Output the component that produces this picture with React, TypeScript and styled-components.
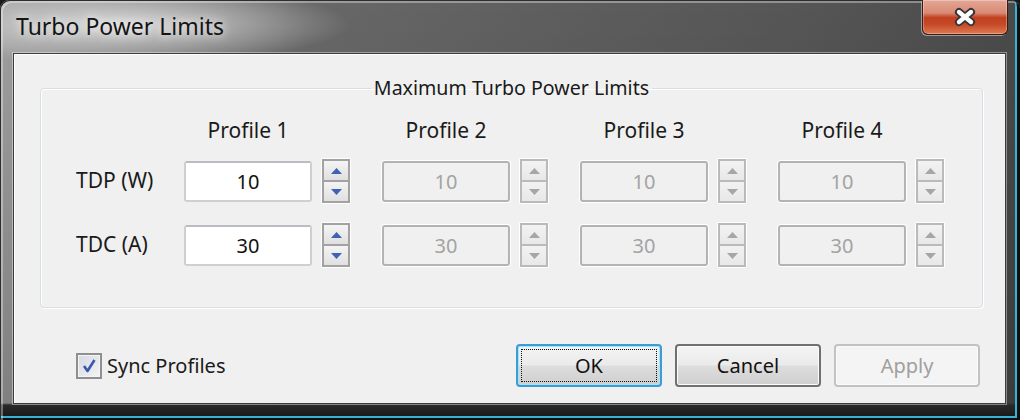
import styled, { createGlobalStyle } from "styled-components";

const GlobalStyle = createGlobalStyle`
  html, body {
    margin: 0;
    padding: 0;
    background: #1a1a1a;
  }
  body {
    font-family: "Noto Sans", "Open Sans", sans-serif;
  }
`;

const profiles = [1, 2, 3, 4];
const limits = [
  { label: "TDP (W)", value: "10" },
  { label: "TDC (A)", value: "30" },
];

function Arrow(props: { up?: boolean }) {
  return (
    <svg width="11" height="6" viewBox="0 0 11 6">
      <path d={props.up ? "M0 6 L5.5 0 L11 6Z" : "M0 0 L5.5 6 L11 0Z"} fill="currentColor" />
    </svg>
  );
}

function Spinner(props: { disabled?: boolean }) {
  return (
    <SpinFrame>
      <SpinButton disabled={props.disabled}>
        <Arrow up />
      </SpinButton>
      <SpinButton disabled={props.disabled}>
        <Arrow />
      </SpinButton>
    </SpinFrame>
  );
}

export default function App() {
  return (
    <>
      <GlobalStyle />
      <Window>
        <TitleBar>
          <Title>Turbo Power Limits</Title>
          <CloseButton aria-label="Close">
            <svg width="26" height="20" viewBox="0 0 26 20">
              <path d="M7 5 L19 15 M19 5 L7 15" stroke="#30323c" strokeWidth="8" strokeLinecap="round" />
              <path d="M7 5 L19 15 M19 5 L7 15" stroke="#fdfdfd" strokeWidth="4.4" strokeLinecap="round" />
            </svg>
          </CloseButton>
        </TitleBar>
        <Client>
          <Group>
            <Legend>Maximum Turbo Power Limits</Legend>
            <Grid>
              <span />
              {profiles.map((p) => (
                <Heading key={p}>Profile {p}</Heading>
              ))}
              {limits.map((row) => (
                <>
                  <RowLabel key={row.label}>{row.label}</RowLabel>
                  {profiles.map((p) => (
                    <Cell key={row.label + p}>
                      <TextBox value={row.value} readOnly disabled={p !== 1} />
                      <Spinner disabled={p !== 1} />
                    </Cell>
                  ))}
                </>
              ))}
            </Grid>
          </Group>
          <Footer>
            <CheckLabel>
              <CheckBox>
                <svg width="18" height="18" viewBox="0 0 18 18">
                  <path d="M4 9 L7.5 14 L14.5 3" stroke="#3a58ac" strokeWidth="2.6" fill="none" strokeLinejoin="round" />
                </svg>
              </CheckBox>
              Sync Profiles
            </CheckLabel>
            <Buttons>
              <Button $focused>OK</Button>
              <Button>Cancel</Button>
              <Button disabled>Apply</Button>
            </Buttons>
          </Footer>
        </Client>
      </Window>
    </>
  );
}

const Window = styled.div`
  width: 1020px;
  height: 420px;
  box-sizing: border-box;
  display: flex;
  flex-direction: column;
  padding: 0 14px 16px 13px;
  border-radius: 9px 9px 0 0;
  background:
    linear-gradient(to bottom, rgba(0, 0, 0, 0) 403px, #2a2a2a 405px, #151515 420px),
    radial-gradient(ellipse 230px 40px at 120px 24px, rgba(222, 222, 222, 0.9), rgba(200, 200, 200, 0) 100%),
    linear-gradient(to bottom, rgba(0, 0, 0, 0) 0%, rgba(0, 0, 0, 0.2) 100%),
    linear-gradient(to right, #a0a0a0 0%, #888888 12%, #686868 30%, #5e5e5e 55%, #555555 80%, #4a4a4a 100%);
  box-shadow:
    inset 1px 1px 0 #2e2e2e,
    inset 3px 3px 0 rgba(255, 255, 255, 0.35),
    inset -3px -2px 0 #101010,
    inset -5px -4px 0 #38b2d4;
`;

const TitleBar = styled.div`
  height: 53px;
  flex: none;
  display: flex;
  justify-content: space-between;
  align-items: flex-start;
  margin-right: -2px;
`;

const Title = styled.h1`
  margin: 12px 0 0 3px;
  font: 400 23px/28px "Noto Sans", "Open Sans", sans-serif;
  color: #141414;
  text-shadow:
    0 0 8px rgba(255, 255, 255, 0.85),
    0 0 16px rgba(255, 255, 255, 0.6);
`;

const CloseButton = styled.button`
  width: 86px;
  height: 35px;
  padding: 0;
  display: flex;
  align-items: center;
  justify-content: center;
  border: 1px solid #3a1a12;
  border-top: none;
  border-radius: 0 0 6px 6px;
  background: linear-gradient(
    to bottom,
    #e3a696 0%,
    #d98a74 38%,
    #c23f1e 52%,
    #c54a28 72%,
    #de7a52 100%
  );
  box-shadow:
    inset 0 0 0 1px rgba(255, 255, 255, 0.3),
    -1px 1px 0 rgba(255, 255, 255, 0.45);
`;

const Client = styled.div`
  flex: 1;
  display: flex;
  flex-direction: column;
  background: #f0f0f0;
  border: 1px solid #3c3c3c;
  box-shadow:
    0 0 0 1px rgba(255, 255, 255, 0.4),
    inset 1px 1px 0 #ffffff;
`;

const Group = styled.fieldset`
  margin: 22px 22px 0 26px;
  padding: 20px 0 39px 0;
  min-width: 0;
  border: 1px solid #d5dfe5;
  border-radius: 4px;
  box-shadow:
    inset 1px 1px 0 #ffffff,
    1px 1px 0 #ffffff;
`;

const Legend = styled.legend`
  margin: 0 auto;
  padding: 0 3px;
  font-size: 19.6px;
  line-height: 24px;
  color: #1a1a1a;
`;

const Grid = styled.div`
  display: grid;
  grid-template-columns: 108px repeat(4, 198px);
  grid-template-rows: 20px 46px 46px;
  row-gap: 18px;
  align-items: center;
  margin-left: 35px;
`;

const Heading = styled.div`
  width: 128px;
  text-align: center;
  font-size: 21px;
  line-height: 20px;
  color: #1a1a1a;
`;

const RowLabel = styled.div`
  font-size: 21px;
  line-height: 24px;
  color: #1a1a1a;
  margin-top: -3px;
`;

const Cell = styled.div`
  display: flex;
  align-items: center;
  gap: 9px;
`;

const TextBox = styled.input`
  width: 128px;
  height: 41px;
  box-sizing: border-box;
  padding: 0;
  margin: 0;
  text-align: center;
  font: 20px "Noto Sans", "Open Sans", sans-serif;
  color: #111;
  background: #ffffff;
  border: 2px solid #cdcfd2;
  border-top-color: #b9bcc0;
  border-radius: 3px;
  outline: none;

  &:disabled {
    color: #a3a3a3;
    -webkit-text-fill-color: #a3a3a3;
    background: #f0f0f0;
    border-color: #b3b3b3;
    box-shadow: 0 0 0 1px #ffffff;
    opacity: 1;
  }
`;

const SpinFrame = styled.div`
  width: 30px;
  height: 46px;
  box-sizing: border-box;
  padding: 1px;
  display: flex;
  flex-direction: column;
  background: #ffffff;
  border-radius: 2px;
`;

const SpinButton = styled.button`
  flex: 1;
  padding: 0;
  margin: 0;
  display: flex;
  align-items: center;
  justify-content: center;
  color: #4062b4;
  border: 2px solid #a2a2a2;
  background: linear-gradient(to bottom, #f4f4f4, #e0e0e0);

  & + & {
    margin-top: -2px;
  }

  &:disabled {
    color: #a6a6a6;
    border-color: #bababa;
    background: linear-gradient(to bottom, #f2f2f2, #e8e8e8);
  }
`;

const Footer = styled.div`
  display: flex;
  align-items: center;
  justify-content: space-between;
  height: 43px;
  margin: 36px 25px 0 62px;
`;

const CheckLabel = styled.label`
  display: flex;
  align-items: center;
  gap: 5px;
  font-size: 20px;
  color: #1a1a1a;
`;

const CheckBox = styled.span`
  width: 26px;
  height: 26px;
  box-sizing: border-box;
  display: flex;
  align-items: center;
  justify-content: center;
  border: 2px solid #8e8f8f;
  background: linear-gradient(135deg, #d6d9e2, #f3f4f7);
  box-shadow: inset 0 0 0 1px #f4f4f4;
`;

const Buttons = styled.div`
  display: flex;
  gap: 13px;
`;

const Button = styled.button<{ $focused?: boolean }>`
  width: 146px;
  height: 43px;
  box-sizing: border-box;
  padding: 0;
  font: 20px "Noto Sans", "Open Sans", sans-serif;
  color: #111;
  border: 2px solid ${(p) => (p.$focused ? "#3d9bd6" : "#707070")};
  border-radius: 4px;
  background: linear-gradient(to bottom, #f3f3f3 0%, #ebebeb 48%, #dddddd 52%, #cfcfcf 100%);
  box-shadow: inset 0 0 0 1px ${(p) => (p.$focused ? "#9fe6fb" : "#fbfbfb")};
  outline: ${(p) => (p.$focused ? "1px dotted #111" : "none")};
  outline-offset: -6px;

  &:disabled {
    color: #a0a0a0;
    border-color: #c0c3c5;
    background: #f4f4f4;
    box-shadow: inset 0 0 0 1px #fbfbfb;
  }
`;
